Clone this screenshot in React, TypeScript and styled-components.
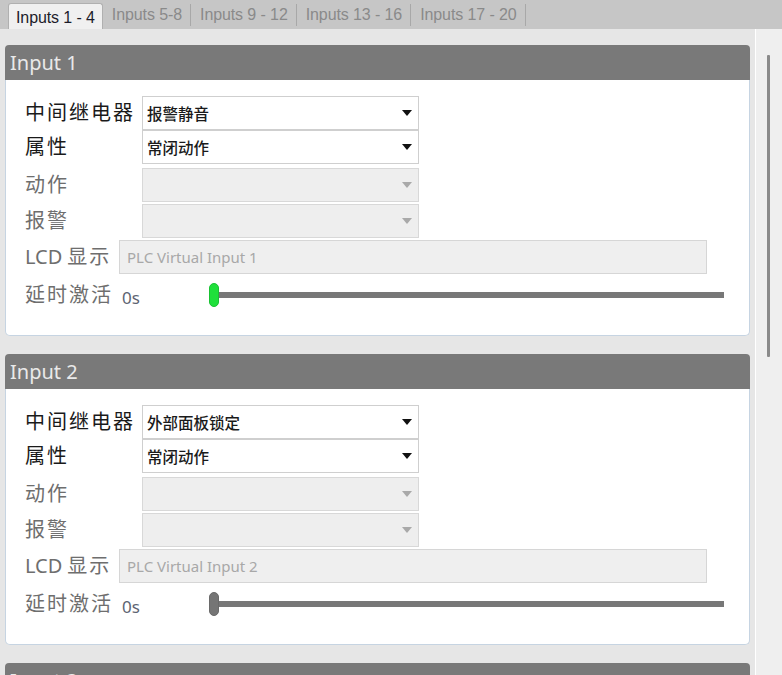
import React from "react";
import styled, { createGlobalStyle } from "styled-components";

const Global = createGlobalStyle`
  html, body { margin: 0; padding: 0; overflow: hidden; background: #e6e6e6; }
  * { box-sizing: border-box; }
`;

const Page = styled.div`
  width: 782px;
  height: 675px;
  display: flex;
  flex-direction: column;
  font-family: "Noto Sans", "Noto Sans CJK SC", sans-serif;
  overflow: hidden;
`;

const TabBar = styled.div`
  height: 29px;
  flex: none;
  background: #c6c6c6;
  display: flex;
  align-items: flex-end;
  padding-left: 8px;
`;

const Tab = styled.div<{ $active?: boolean }>`
  height: ${(p) => (p.$active ? "27px" : "25px")};
  display: flex;
  align-items: center;
  font-family: "Liberation Sans", Arial, sans-serif;
  font-size: 16px;
  letter-spacing: -0.1px;
  white-space: nowrap;
  color: ${(p) => (p.$active ? "#1c1c2a" : "#8a8a8a")};
  background: ${(p) => (p.$active ? "#f0f0f0" : "transparent")};
  border: ${(p) => (p.$active ? "1px solid #b0b0b0" : "none")};
  border-bottom: none;
  border-radius: ${(p) => (p.$active ? "3px 3px 0 0" : "0")};
  padding: ${(p) => (p.$active ? "2px 7px 0 7px" : "0 8px 3px 9px")};
  margin-bottom: ${(p) => (p.$active ? "-1px" : "0")};
`;

const Sep = styled.div`
  width: 1px;
  height: 22px;
  margin-bottom: 3px;
  background: #a8a8a8;
`;

const Content = styled.div`
  flex: 1;
  display: flex;
  background: #e6e6e6;
  overflow: hidden;
`;

const Main = styled.div`
  width: 755px;
  padding: 16px 5px 0 5px;
  display: flex;
  flex-direction: column;
  gap: 18px;
`;

const ScrollTrack = styled.div`
  width: 27px;
  background: #efefef;
  border-left: 1px solid #ffffff;
  padding: 26px 0 0 11px;
`;

const ScrollThumb = styled.div`
  width: 3px;
  height: 302px;
  background: #8a8a8a;
  border-radius: 1px;
`;

const Panel = styled.section`
  flex: none;
  width: 745px;
`;

const PanelHeader = styled.div`
  height: 35px;
  background: #797979;
  border-radius: 4px 4px 0 0;
  display: flex;
  align-items: center;
  padding-left: 5px;
  color: #e9e9e9;
  font-size: 20px;
  font-family: "Noto Sans", sans-serif;
`;

const PanelBody = styled.div`
  height: 256px;
  background: #ffffff;
  border: 1px solid #c6d4e2;
  border-top: none;
  border-radius: 0 0 5px 5px;
  padding: 16px 0 0 19px;
  display: flex;
  flex-direction: column;
`;

const Row = styled.div<{ $mt?: number; $h?: number }>`
  display: flex;
  align-items: center;
  height: ${(p) => p.$h ?? 34}px;
  margin-top: ${(p) => p.$mt ?? 0}px;
`;

const Label = styled.div<{ $w: number; $muted?: boolean }>`
  width: ${(p) => p.$w}px;
  flex: none;
  font-family: "Noto Sans", "Noto Sans CJK SC", sans-serif;
  font-size: 20px;
  letter-spacing: 2px;
  color: ${(p) => (p.$muted ? "#6e6e6e" : "#1a1a1a")};
  white-space: nowrap;
  line-height: 1;
`;

const Latin = styled.span`
  letter-spacing: 0;
  margin-right: 5px;
`;

const Select = styled.div<{ $disabled?: boolean }>`
  width: 277px;
  height: 34px;
  border: 1px solid ${(p) => (p.$disabled ? "#d8d8d8" : "#cfcfcf")};
  background: ${(p) => (p.$disabled ? "#eeeeee" : "#ffffff")};
  display: flex;
  align-items: center;
  justify-content: space-between;
  padding: 0 6px 0 4px;
  font-family: "Noto Sans CJK SC", sans-serif;
  font-size: 15.5px;
  font-weight: 500;
  color: #1a1a1a;
`;

const Arrow = styled.div<{ $disabled?: boolean }>`
  width: 0;
  height: 0;
  border-left: 5px solid transparent;
  border-right: 5px solid transparent;
  border-top: 6px solid ${(p) => (p.$disabled ? "#a9a9a9" : "#111111")};
`;

const TextBox = styled.div`
  width: 588px;
  height: 34px;
  border: 1px solid #d6d6d6;
  background: #efefef;
  display: flex;
  align-items: center;
  padding-left: 7px;
  font-family: "Noto Sans", sans-serif;
  font-size: 15px;
  color: #a8a8a8;
`;

const Value = styled.div`
  width: 87px;
  flex: none;
  font-family: "Noto Sans", sans-serif;
  font-size: 17px;
  color: #5d6472;
  padding-top: 4px;
`;

const Slider = styled.div`
  position: relative;
  width: 515px;
  height: 24px;
  display: flex;
  align-items: center;
`;

const Track = styled.div`
  margin-left: 5px;
  flex: 1;
  height: 6px;
  background: #777777;
`;

const Thumb = styled.div<{ $active?: boolean }>`
  position: absolute;
  left: 0;
  top: 0;
  width: 10px;
  height: 24px;
  border-radius: 5px;
  background: ${(p) => (p.$active ? "#1fe03b" : "#757575")};
  border: 1px solid ${(p) => (p.$active ? "#19c232" : "#6a6a6a")};
`;

type InputData = { title: string; relay: string; lcd: string; active?: boolean };

const inputs: InputData[] = [
  { title: "Input 1", relay: "报警静音", lcd: "PLC Virtual Input 1", active: true },
  { title: "Input 2", relay: "外部面板锁定", lcd: "PLC Virtual Input 2" },
  { title: "Input 3", relay: "无", lcd: "PLC Virtual Input 3" },
];

function InputPanel({ data }: { data: InputData }) {
  return (
    <Panel>
      <PanelHeader>{data.title}</PanelHeader>
      <PanelBody>
        <Row>
          <Label $w={117}>中间继电器</Label>
          <Select>
            <span>{data.relay}</span>
            <Arrow />
          </Select>
        </Row>
        <Row>
          <Label $w={117}>属性</Label>
          <Select>
            <span>常闭动作</span>
            <Arrow />
          </Select>
        </Row>
        <Row $mt={4}>
          <Label $w={117} $muted>动作</Label>
          <Select $disabled>
            <span />
            <Arrow $disabled />
          </Select>
        </Row>
        <Row $mt={2}>
          <Label $w={117} $muted>报警</Label>
          <Select $disabled>
            <span />
            <Arrow $disabled />
          </Select>
        </Row>
        <Row $mt={2}>
          <Label $w={94} $muted>
            <Latin>LCD</Latin>显示
          </Label>
          <TextBox>{data.lcd}</TextBox>
        </Row>
        <Row $mt={3} $h={36}>
          <Label $w={97} $muted>延时激活</Label>
          <Value>0s</Value>
          <Slider>
            <Track />
            <Thumb $active={data.active} />
          </Slider>
        </Row>
      </PanelBody>
    </Panel>
  );
}

export default function App() {
  const tabs = ["Inputs 5-8", "Inputs 9 - 12", "Inputs 13 - 16", "Inputs 17 - 20"];
  return (
    <Page>
      <Global />
      <TabBar>
        <Tab $active>Inputs 1 - 4</Tab>
        {tabs.map((t, i) => (
          <React.Fragment key={t}>
            {i > 0 && <Sep />}
            <Tab>{t}</Tab>
          </React.Fragment>
        ))}
        <Sep />
      </TabBar>
      <Content>
        <Main>
          {inputs.map((d) => (
            <InputPanel key={d.title} data={d} />
          ))}
        </Main>
        <ScrollTrack>
          <ScrollThumb />
        </ScrollTrack>
      </Content>
    </Page>
  );
}
